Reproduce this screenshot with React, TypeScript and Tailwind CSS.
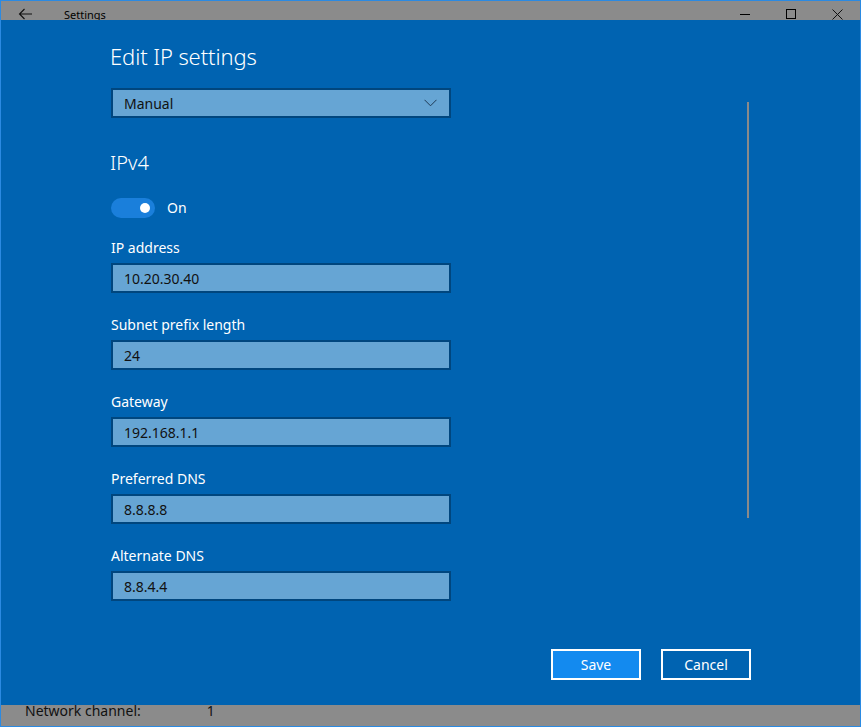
import React, { useState } from 'react';

const fields = [
  { label: 'IP address', value: '10.20.30.40' },
  { label: 'Subnet prefix length', value: '24' },
  { label: 'Gateway', value: '192.168.1.1' },
  { label: 'Preferred DNS', value: '8.8.8.8' },
  { label: 'Alternate DNS', value: '8.8.4.4' },
];

export default function App() {
  const [on, setOn] = useState(true);

  return (
    <div className="w-[861px] h-[727px] border border-[#2b8ae2] flex flex-col overflow-hidden font-['Noto_Sans',sans-serif]">
      {/* title bar */}
      <div className="h-[19px] bg-[#8b8b8b] flex items-center text-black relative">
        <svg className="ml-[17px] mt-[7px]" width="15" height="12" viewBox="0 0 15 12" fill="none" stroke="#111" strokeWidth="1.1">
          <path d="M14 6H1.5M6.5 1L1.5 6l5 5" />
        </svg>
        <span className="ml-[31px] mt-[7px] text-[11px] leading-none">Settings</span>
        <div className="ml-auto flex items-center mt-[7px]">
          <span className="w-[46px] flex justify-center">
            <span className="block w-[10px] h-px bg-black" />
          </span>
          <span className="w-[46px] flex justify-center">
            <span className="block w-[10px] h-[10px] border border-black" />
          </span>
          <span className="w-[46px] flex justify-center">
            <svg width="11" height="11" viewBox="0 0 11 11" stroke="#111" strokeWidth="1">
              <path d="M0.5 0.5l10 10M10.5 0.5l-10 10" />
            </svg>
          </span>
        </div>
      </div>

      {/* main */}
      <div className="flex-1 bg-[#0063b1] relative pl-[110px]">
        <div className="w-[640px] flex flex-col">
          <h1 className="mt-[21px] -ml-px text-[22px] leading-[30px] font-light text-white tracking-[-0.1px]">Edit IP settings</h1>

          <div className="mt-[17px] w-[340px] h-[30px] bg-[#66a5d4] border-2 border-[#00467e] flex items-center pl-[11px] pr-[12px] text-[14px] text-[#111]">
            <span>Manual</span>
            <svg className="ml-auto" width="13" height="8" viewBox="0 0 13 8" fill="none" stroke="#1f3a55" strokeWidth="1">
              <path d="M0.5 0.8l6 6 6-6" />
            </svg>
          </div>

          <h2 className="mt-[31px] -ml-px text-[20px] leading-[28px] font-light text-white">IPv4</h2>

          <div className="mt-[20px] flex items-center">
            <button
              onClick={() => setOn(!on)}
              className="w-[44px] h-[20px] rounded-full bg-[#1a7fdb] flex items-center justify-end pr-[5px]"
            >
              <span className="block w-[10px] h-[10px] rounded-full bg-white" />
            </button>
            <span className="ml-[12px] text-[14px] text-white">{on ? 'On' : 'Off'}</span>
          </div>

          {fields.map((f, i) => (
            <div key={f.label} className={i === 0 ? 'mt-[20px]' : 'mt-[22px]'}>
              <div className="h-[20px] text-[14px] leading-[20px] text-white">{f.label}</div>
              <div className="mt-[5px] w-[340px] h-[30px] bg-[#66a5d4] border-2 border-[#00467e] flex items-center pl-[11px] text-[14px] text-[#111]">
                {f.value}
              </div>
            </div>
          ))}

          <div className="mt-[48px] flex justify-end gap-[20px]">
            <button className="w-[90px] h-[31px] bg-[#138aef] border-2 border-white text-white text-[14px]">Save</button>
            <button className="w-[90px] h-[31px] border-2 border-white text-white text-[14px]">Cancel</button>
          </div>
        </div>

        {/* scrollbar */}
        <div className="absolute left-[746px] top-[82px] w-[2px] h-[416px] bg-[#8a8a8a]" />
      </div>

      {/* bottom strip */}
      <div className="h-[21px] bg-[#8b8b8b] flex items-start text-[14px] leading-[14px] text-[#111]">
        <span className="ml-[24px] mt-[-1px]">Network channel:</span>
        <span className="ml-[66px] mt-[-1px]">1</span>
      </div>
    </div>
  );
}
